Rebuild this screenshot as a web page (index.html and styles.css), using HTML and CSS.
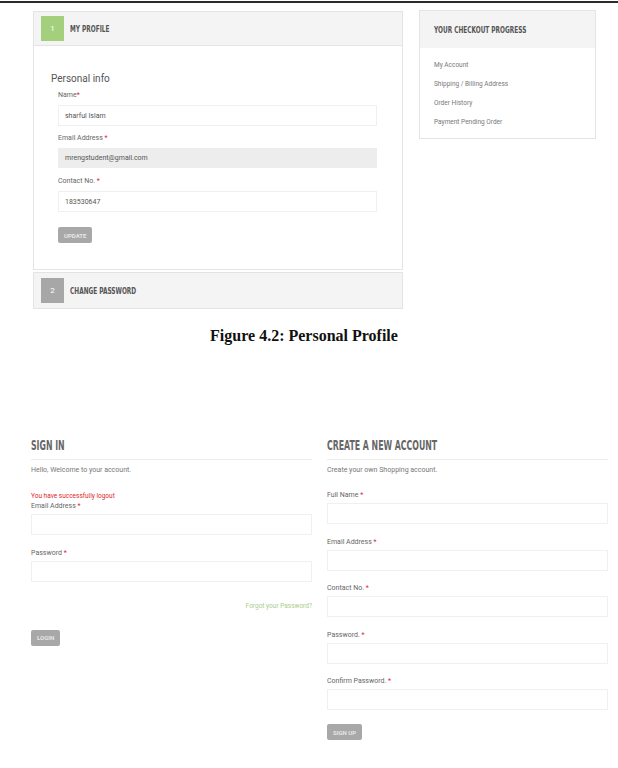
FILE: index.html
```html
<!DOCTYPE html>
<html lang="en">
  <head>
    <meta charset="UTF-8" />
    <meta name="viewport" content="width=device-width, initial-scale=1.0" />
    <title>Personal Profile</title>
    <link rel="stylesheet" href="styles.css">
  </head>
  <body>
    <div class="page-rule"></div>

    <!-- profile screen -->
    <section class="profile">
      <div class="profile-main">
        <div class="panel">
          <div class="panel-head">
            <span class="step step-active">1</span>
            <h3 class="panel-title"><span>My Profile</span></h3>
          </div>
          <div class="panel-body">
            <h4 class="form-title">Personal info</h4>
            <div class="fields">
              <label>Name<span class="req">*</span></label>
              <div class="input">sharful Islam</div>
              <label>Email Address <span class="req">*</span></label>
              <div class="input input-disabled">mrengstudent@gmail.com</div>
              <label>Contact No. <span class="req">*</span></label>
              <div class="input">183530647</div>
              <button>Update</button>
            </div>
          </div>
        </div>
        <div class="panel panel-closed">
          <div class="panel-head">
            <span class="step">2</span>
            <h3 class="panel-title"><span>Change Password</span></h3>
          </div>
        </div>
      </div>

      <aside class="progress">
        <div class="progress-head">
          <h3 class="panel-title"><span>Your Checkout Progress</span></h3>
        </div>
        <ul>
          <li><a href="#">My Account</a></li>
          <li><a href="#">Shipping / Billing Address</a></li>
          <li><a href="#">Order History</a></li>
          <li><a href="#">Payment Pending Order</a></li>
        </ul>
      </aside>
    </section>

    <p class="caption">Figure 4.2: Personal Profile</p>

    <!-- sign in / register screen -->
    <section class="auth">
      <div class="auth-col">
        <h2 class="auth-title"><span>Sign In</span></h2>
        <p class="lead">Hello, Welcome to your account.</p>
        <p class="notice">You have successfully logout</p>
        <label>Email Address <span class="req">*</span></label>
        <div class="input"></div>
        <label class="spaced">Password <span class="req">*</span></label>
        <div class="input"></div>
        <a class="forgot" href="#">Forgot your Password?</a>
        <button>Login</button>
      </div>
      <div class="auth-col">
        <h2 class="auth-title"><span>Create a new account</span></h2>
        <p class="lead">Create your own Shopping account.</p>
        <label class="first">Full Name <span class="req">*</span></label>
        <div class="input"></div>
        <label class="spaced">Email Address <span class="req">*</span></label>
        <div class="input"></div>
        <label class="spaced">Contact No. <span class="req">*</span></label>
        <div class="input"></div>
        <label class="spaced">Password. <span class="req">*</span></label>
        <div class="input"></div>
        <label class="spaced">Confirm Password. <span class="req">*</span></label>
        <div class="input"></div>
        <button class="signup">Sign Up</button>
      </div>
    </section>
  </body>
</html>
```

FILE: styles.css
```css
* {
  box-sizing: border-box;
  margin: 0;
  padding: 0;
}

body {
  font-family: Roboto, "Liberation Sans", sans-serif;
  color: #777;
  background: #fff;
  width: 618px;
}

.page-rule {
  height: 2px;
  margin-top: 1px;
  background: #2b2b2b;
}

/* profile screen */

.profile {
  display: flex;
  align-items: flex-start;
  padding-left: 33px;
  margin-top: 7px;
}

.profile-main {
  width: 370px;
  margin-top: 1px;
  display: flex;
  flex-direction: column;
  gap: 2px;
}

.panel {
  border: 1px solid #e4e4e4;
  background: #fff;
}

.panel-head {
  display: flex;
  align-items: center;
  height: 34px;
  padding-left: 7px;
  background: #f4f4f4;
  border-bottom: 1px solid #e4e4e4;
}

.panel-closed .panel-head {
  height: 35px;
  border-bottom: none;
}

.step {
  width: 23px;
  height: 25px;
  display: flex;
  align-items: center;
  justify-content: center;
  background: #a7a7a7;
  color: #fff;
  font-size: 8px;
}

.step-active {
  background: #a4cf7c;
}

/* condensed display face for headings */
.panel-title,
.auth-title {
  font-family: "DejaVu Sans Condensed", "DejaVu Sans", sans-serif;
  font-stretch: condensed;
  font-weight: bold;
  text-transform: uppercase;
  white-space: nowrap;
}

.panel-title span,
.auth-title span {
  display: inline-block;
  transform-origin: left center;
}

.panel-title {
  font-size: 9.5px;
  color: #555;
  margin-left: 6px;
}

.panel-title span {
  transform: scaleX(0.68);
}

.panel-body {
  padding: 27px 25px 26px 17px;
}

.form-title {
  font-size: 10px;
  font-weight: normal;
  color: #555;
  line-height: 12px;
  margin-bottom: 5px;
}

.fields {
  padding-left: 7px;
  display: flex;
  flex-direction: column;
  align-items: flex-start;
}

label {
  display: block;
  font-size: 7px;
  line-height: 10px;
  color: #666;
  margin-bottom: 5px;
}

.req {
  color: #e0252c;
}

.input {
  width: 100%;
  height: 21px;
  border: 1px solid #f0f0f0;
  font-size: 7px;
  color: #555;
  padding-left: 6px;
  display: flex;
  align-items: center;
  margin-bottom: 7px;
}

.input-disabled {
  background: #ededed;
  border-color: #ededed;
  height: 20px;
  margin-bottom: 8px;
}

button {
  background: #a8a8a8;
  color: #e6e6e6;
  border: none;
  border-radius: 2px;
  font-family: Roboto, sans-serif;
  font-size: 6px;
  font-weight: bold;
  text-transform: uppercase;
  height: 16px;
  padding: 0 6px;
  margin-top: 8px;
}

.progress {
  width: 177px;
  margin-left: 16px;
  border: 1px solid #e4e4e4;
}

.progress-head {
  height: 37px;
  display: flex;
  align-items: center;
  padding-left: 8px;
  background: #f4f4f4;
}

.progress ul {
  list-style: none;
  padding: 12px 14px 11px;
}

.progress li {
  font-size: 6.5px;
  line-height: 10px;
  margin-bottom: 9px;
}

.progress li:last-child {
  margin-bottom: 0;
}

.progress a {
  color: #777;
  text-decoration: none;
}

.caption {
  font-family: "Liberation Serif", serif;
  font-weight: bold;
  font-size: 16px;
  color: #111;
  text-align: center;
  margin: 17px 0 0 -10px;
  line-height: 20px;
}

/* sign in / register */

.auth {
  display: flex;
  gap: 15px;
  padding-left: 31px;
  margin-top: 91px;
}

.auth-col {
  width: 281px;
  display: flex;
  flex-direction: column;
  align-items: flex-start;
}

.auth-title {
  width: 100%;
  font-size: 14px;
  color: #666;
  line-height: 16px;
  padding-bottom: 6px;
  border-bottom: 1px solid #ebebeb;
}

.auth-title span {
  transform: scaleX(0.62);
}

.lead {
  font-size: 7px;
  line-height: 10px;
  margin-top: 5px;
  color: #777;
}

.notice {
  font-size: 6.5px;
  line-height: 9px;
  color: #e0252c;
  margin-top: 17px;
}

.auth label {
  margin-bottom: 3px;
}

.auth .input {
  margin-bottom: 0;
}

.auth label.first {
  margin-top: 15px;
}

.auth label.spaced {
  margin-top: 12.5px;
}

.forgot {
  align-self: flex-end;
  font-size: 6.5px;
  color: #a9cd8a;
  text-decoration: none;
  margin-top: 20px;
}

.auth-col:first-child button {
  margin-top: 20px;
}

.signup {
  margin-top: 14px;
}
```
